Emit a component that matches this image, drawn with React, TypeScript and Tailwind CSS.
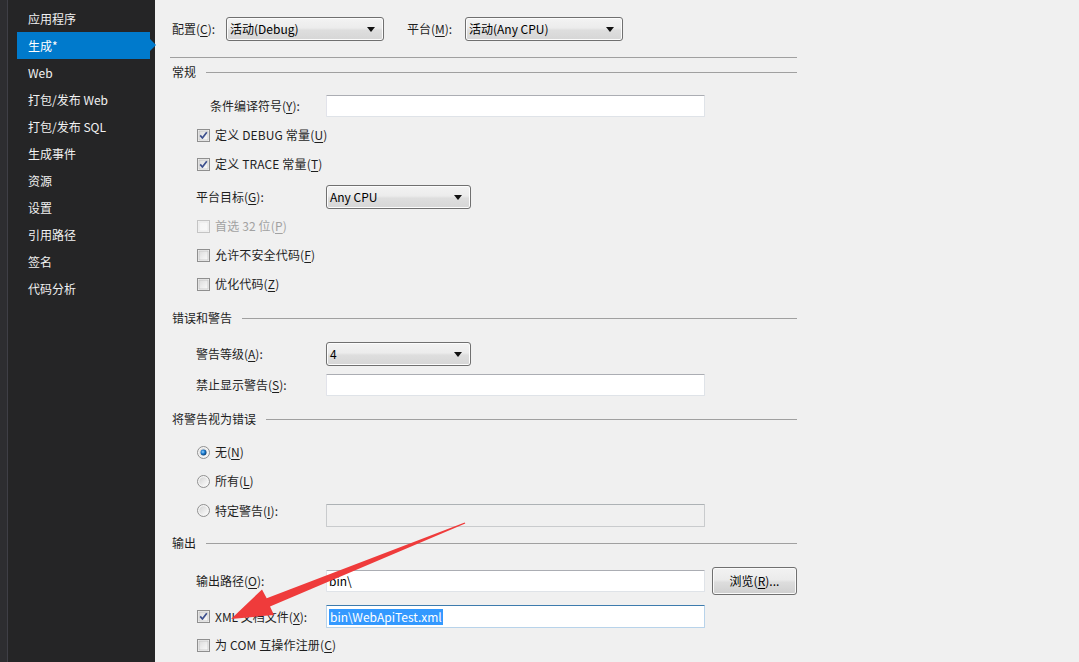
import React from "react";

const FONT = { fontFamily: '"Noto Sans CJK SC", "Noto Sans", sans-serif' };

function U({ children }: { children: React.ReactNode }) {
  return <span className="underline underline-offset-[2px] decoration-[1px]">{children}</span>;
}

function Select({ w, value }: { w: string; value: string }) {
  return (
    <div
      className={`${w} h-[24px] border border-[#707070] rounded-[3px] bg-[linear-gradient(to_bottom,#f3f3f3_0%,#ececec_45%,#dedede_55%,#d6d6d6_100%)] flex items-center pl-[3px] pr-[8px] shadow-[inset_0_0_0_1px_#fcfcfc]`}
    >
      <span className="flex-1 text-[#000]">{value}</span>
      <svg width="8" height="5" viewBox="0 0 8 5">
        <path d="M0 0 H8 L4 5 Z" fill="#111" />
      </svg>
    </div>
  );
}

function Checkbox({ checked, disabled }: { checked?: boolean; disabled?: boolean }) {
  return (
    <svg width="13" height="13" viewBox="0 0 13 13" className="shrink-0">
      <defs>
        <linearGradient id={disabled ? "cbd" : "cbg"} x1="0" y1="0" x2="1" y2="1">
          <stop offset="0" stopColor={disabled ? "#f4f4f4" : "#dcdcdc"} />
          <stop offset="1" stopColor={disabled ? "#fafafa" : "#fbfbfb"} />
        </linearGradient>
      </defs>
      <rect x="0.5" y="0.5" width="12" height="12" fill="#f4f4f4" stroke={disabled ? "#c4c4c4" : "#8f8f8f"} />
      <rect x="2" y="2" width="9" height="9" fill={`url(#${disabled ? "cbd" : "cbg"})`} stroke={disabled ? "#e2e2e2" : "#b8b8b8"} strokeWidth="0.6" />
      {checked && (
        <path d="M3.2 6.4 L5.4 9 L9.8 3.2" fill="none" stroke="#3c4f8d" strokeWidth="1.7" strokeLinejoin="round" />
      )}
    </svg>
  );
}

function Radio({ checked }: { checked?: boolean }) {
  return (
    <svg width="13" height="13" viewBox="0 0 13 13" className="shrink-0">
      <defs>
        <linearGradient id="rg" x1="0" y1="0" x2="1" y2="1">
          <stop offset="0" stopColor="#d4d4d4" />
          <stop offset="1" stopColor="#fcfcfc" />
        </linearGradient>
        <radialGradient id="rdot" cx="0.4" cy="0.4" r="0.6">
          <stop offset="0" stopColor="#9fd5ff" />
          <stop offset="0.5" stopColor="#1f7fd2" />
          <stop offset="1" stopColor="#0b3f74" />
        </radialGradient>
      </defs>
      <circle cx="6.5" cy="6.5" r="6" fill="#f4f4f4" stroke="#8f8f8f" />
      <circle cx="6.5" cy="6.5" r="4.3" fill="url(#rg)" />
      {checked && <circle cx="6.5" cy="6.5" r="3" fill="url(#rdot)" />}
    </svg>
  );
}

function Header({ title, mt }: { title: string; mt: string }) {
  return (
    <div className={`${mt} h-[16px] flex items-center`}>
      <span>{title}</span>
      <div className="flex-1 ml-[10px] h-px bg-[#a0a0a0]" />
    </div>
  );
}

function CheckRow({ mt, label, checked, disabled }: { mt: string; label: React.ReactNode; checked?: boolean; disabled?: boolean }) {
  return (
    <div className={`${mt} h-[16px] flex items-center pl-[25px]`}>
      <Checkbox checked={checked} disabled={disabled} />
      <span className={`ml-[5px] tracking-[0.15px] ${disabled ? "text-[#a2a2a2]" : ""}`}>{label}</span>
    </div>
  );
}

function TextBox({ value, disabled, focused }: { value?: React.ReactNode; disabled?: boolean; focused?: boolean }) {
  const border = focused
    ? "border border-[#b8d3ea] border-t-[#3d7bad]"
    : disabled
    ? "border border-[#c9cbcd] border-t-[#adb2b5]"
    : "border border-[#dfe3e8] border-t-[#abadb3] border-l-[#e2e3ea]";
  return (
    <div className={`w-[379px] h-full ${border} ${disabled ? "bg-[#f0f0f0]" : "bg-white"} flex items-center pl-[2px] text-[#000] rounded-[1px]`}>
      {value}
    </div>
  );
}

export default function App() {
  const nav = ["应用程序", "生成*", "Web", "打包/发布 Web", "打包/发布 SQL", "生成事件", "资源", "设置", "引用路径", "签名", "代码分析"];
  return (
    <div className="relative w-[1079px] h-[662px] overflow-hidden flex text-[12px] leading-none text-[#1e1e1e]" style={FONT}>
      {/* left strip */}
      <div className="w-[7px] bg-[#2d2d30]" />
      <div className="w-px bg-[#3f3f46]" />
      {/* sidebar */}
      <div className="w-[147px] bg-[#252526] pt-[5px] pl-[9px]">
        {nav.map((n, i) =>
          i === 1 ? (
            <div key={n} className="relative h-[27px] w-[133px] bg-[#007acc] flex items-center pl-[11px] text-white">
              {n}
              <div className="absolute right-[-6px] top-[7px] w-0 h-0 border-y-[6px] border-y-transparent border-l-[6px] border-l-[#007acc]" />
            </div>
          ) : (
            <div key={n} className="h-[27px] flex items-center pl-[11px] text-[#f1f1f1]">
              {n}
            </div>
          )
        )}
      </div>
      {/* main */}
      <div className="flex-1 bg-[#f0f0f0] pl-[17px] pt-[17px]">
        <div className="w-[625px]">
          <div className="h-[24px] flex items-center">
            <span className="w-[54px]">
              配置(<U>C</U>):
            </span>
            <Select w="w-[158px]" value="活动(Debug)" />
            <span className="ml-[23px] w-[58px]">
              平台(<U>M</U>):
            </span>
            <Select w="w-[158px]" value="活动(Any CPU)" />
          </div>
          <div className="mt-[16px] -ml-[2px] h-px bg-[#a0a0a0]" />

          <Header mt="mt-[6px]" title="常规" />
          <div className="mt-[15px] h-[22px] flex items-center pl-[38px]">
            <span className="w-[116px]">
              条件编译符号(<U>Y</U>):
            </span>
            <TextBox />
          </div>
          <CheckRow mt="mt-[10px]" checked label={<>定义 DEBUG 常量(<U>U</U>)</>} />
          <CheckRow mt="mt-[13px]" checked label={<>定义 TRACE 常量(<U>T</U>)</>} />
          <div className="mt-[13px] h-[24px] flex items-center pl-[24px]">
            <span className="w-[130px]">
              平台目标(<U>G</U>):
            </span>
            <Select w="w-[145px]" value="Any CPU" />
          </div>
          <CheckRow mt="mt-[9px]" disabled label={<>首选 32 位(<U>P</U>)</>} />
          <CheckRow mt="mt-[13px]" label={<>允许不安全代码(<U>F</U>)</>} />
          <CheckRow mt="mt-[13px]" label={<>优化代码(<U>Z</U>)</>} />

          <Header mt="mt-[18px]" title="错误和警告" />
          <div className="mt-[16px] h-[24px] flex items-center pl-[24px]">
            <span className="w-[130px]">
              警告等级(<U>A</U>):
            </span>
            <Select w="w-[145px]" value="4" />
          </div>
          <div className="mt-[8px] h-[22px] flex items-center pl-[24px]">
            <span className="w-[130px]">
              禁止显示警告(<U>S</U>):
            </span>
            <TextBox />
          </div>

          <Header mt="mt-[15px]" title="将警告视为错误" />
          <div className="mt-[17px] h-[16px] flex items-center pl-[25px]">
            <Radio checked />
            <span className="ml-[5px]">
              无(<U>N</U>)
            </span>
          </div>
          <div className="mt-[13px] h-[16px] flex items-center pl-[25px]">
            <Radio />
            <span className="ml-[5px]">
              所有(<U>L</U>)
            </span>
          </div>
          <div className="mt-[15px] h-[23px] flex items-start">
            <div className="w-[154px] h-[13px] flex items-center pl-[25px]">
              <Radio />
              <span className="ml-[5px]">
                特定警告(<U>I</U>):
              </span>
            </div>
            <TextBox disabled />
          </div>

          <Header mt="mt-[8px]" title="输出" />
          <div className="mt-[16px] h-[28px] flex items-center pl-[24px]">
            <span className="w-[130px]">
              输出路径(<U>O</U>):
            </span>
            <div className="h-[22px]">
              <TextBox value="bin\" />
            </div>
            <button
              className="ml-[7px] w-[85px] h-[28px] border border-[#707070] rounded-[3px] bg-[linear-gradient(to_bottom,#f2f2f2_0%,#ebebeb_45%,#dddddd_55%,#cfcfcf_100%)] shadow-[inset_0_0_0_1px_#fafafa] text-[#000] text-[12px]"
              style={FONT}
            >
              浏览(<U>R</U>)...
            </button>
          </div>
          <div className="mt-[10px] h-[23px] flex items-center">
            <div className="w-[154px] flex items-center pl-[25px]">
              <Checkbox checked />
              <span className="ml-[5px]">
                XML 文档文件(<U>X</U>):
              </span>
            </div>
            <TextBox focused value={<span className="bg-[#3399ff] text-white px-[1px] py-[2px]">bin\WebApiTest.xml</span>} />
          </div>
          <CheckRow mt="mt-[9px]" label={<>为 COM 互操作注册(<U>C</U>)</>} />
        </div>
      </div>

      {/* red annotation arrow */}
      <svg className="absolute left-0 top-0 pointer-events-none" width="1079" height="662" viewBox="0 0 1079 662">
        <polygon
          points="231,619 274,615 270,606.5 465.3,523.6 464.7,522.4 266.7,598.3 262,589.5"
          fill="#ef3b3b"
        />
      </svg>
    </div>
  );
}
